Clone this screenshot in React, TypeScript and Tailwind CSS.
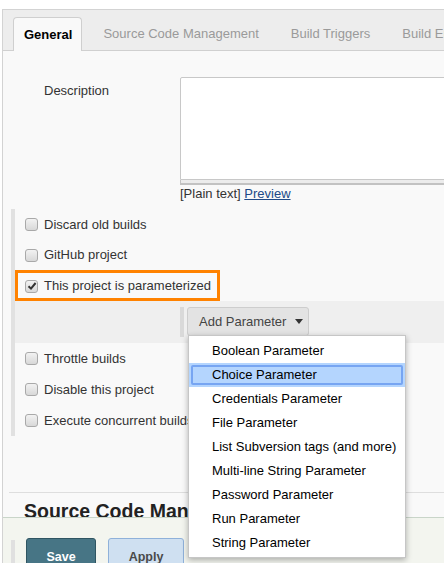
import React from 'react';

const tabs = ['Source Code Management', 'Build Triggers', 'Build Environment'];

const params = [
  'Boolean Parameter',
  'Choice Parameter',
  'Credentials Parameter',
  'File Parameter',
  'List Subversion tags (and more)',
  'Multi-line String Parameter',
  'Password Parameter',
  'Run Parameter',
  'String Parameter',
];

const Checkbox: React.FC<{ checked?: boolean }> = ({ checked }) => (
  <span className="relative flex h-[13px] w-[13px] shrink-0 items-center justify-center rounded-[3px] border border-[#a9a9a9] bg-gradient-to-b from-[#f2f2f2] to-[#d8d8d8]">
    {checked && (
      <svg width="10" height="10" viewBox="0 0 10 10">
        <path d="M1.5 5.2 L4 7.6 L8.6 2" fill="none" stroke="#333" strokeWidth="2" />
      </svg>
    )}
  </span>
);

const OptionRow: React.FC<{ label: string; className?: string }> = ({ label, className = 'h-[31px]' }) => (
  <div className={`flex items-center gap-[6px] pl-[10px] ${className}`}>
    <Checkbox />
    <span className="whitespace-nowrap">{label}</span>
  </div>
);

export default function App() {
  return (
    <div className="relative h-[563px] w-[444px] overflow-hidden bg-white font-['Liberation_Sans',Arial,sans-serif] text-[13px] leading-4 text-[#333]">
      <div className="ml-[2px] mt-[9px] h-[554px] border-l border-t border-[#d3d3d3] bg-[#f9f9f9]">
        {/* Tab bar */}
        <div className="flex h-[41px] items-end gap-[10px] whitespace-nowrap border-b border-[#d0d0d0] bg-[#ededed] pl-[10px]">
          <div className="-mb-px flex h-[34px] items-center rounded-t-[4px] border border-b-0 border-[#cfcfcf] bg-[#f9f9f9] pl-[10px] pr-[9px] font-bold text-black">
            General
          </div>
          {tabs.map((t) => (
            <div key={t} className="flex h-[33px] items-center px-[11px] text-[#9a9a9a]">
              {t}
            </div>
          ))}
        </div>

        {/* Description */}
        <div className="mt-[26px] flex">
          <div className="w-[177px] shrink-0 pl-[41px] pt-[6px]">Description</div>
          <div className="flex-1">
            <div className="h-[103px] w-[300px] rounded-tl-[2px] border border-[#c8c8c8] bg-white" />
            <div className="h-[5px] w-[300px] border-b-[2px] border-l border-[#c2c2c2] bg-[#ececec]" />
            <div className="pt-px">
              [Plain text] <span className="text-[#204a87] underline">Preview</span>
            </div>
          </div>
        </div>

        {/* Options */}
        <div className="ml-[8px] mt-[7px] flex h-[227px]">
          <div className="w-[4px] shrink-0 bg-[#e1e1e1]" />
          <div className="flex-1">
            <OptionRow label="Discard old builds" />
            <OptionRow label="GitHub project" className="h-[30px]" />
            <div className="flex h-[31px] w-[205px] items-center gap-[6px] border-[3px] border-[#ff8200] pl-[7px] pt-[1px]">
              <Checkbox checked />
              <span className="whitespace-nowrap">This project is parameterized</span>
            </div>
            <div className="flex h-[42px] items-start bg-[#efefef] pl-[165px] pt-[6px]">
              <div className="h-[30px] w-[4px] bg-[#d9d9d9]" />
              <div className="ml-[3px] flex h-[29px] w-[122px] items-center rounded-[3px] border border-[#cdcdcd] bg-[#e3e3e3] pl-[11px] text-[#444]">
                Add Parameter
                <svg className="ml-[9px]" width="8" height="5" viewBox="0 0 8 5">
                  <path d="M0 0 H8 L4 5 Z" fill="#333" />
                </svg>
              </div>
            </div>
            <OptionRow label="Throttle builds" />
            <OptionRow label="Disable this project" />
            <OptionRow label="Execute concurrent builds if necessary" />
          </div>
        </div>

        <div className="ml-[6px] mt-[56px] h-px bg-[#dedede]" />
        <div className="mt-[6px] whitespace-nowrap pl-[21px] text-[19.5px] font-bold leading-[24px] text-[#222]">
          Source Code Management
        </div>
      </div>

      {/* Bottom sticky bar */}
      <div className="absolute bottom-0 left-[3px] right-0 top-[517px] border-t border-[#c9d5c9] bg-[#f3f5ef]">
        <div className="flex pl-[8px] pt-[20px]">
          <div className="mt-[2px] h-[30px] w-[4px] bg-[#e0e0e0]" />
          <div className="ml-[11px] flex h-[30px] w-[70px] justify-center rounded-[3px] border border-[#2f5562] bg-[#477585] pt-[10px] text-[12.5px] font-bold text-white">
            Save
          </div>
          <div className="ml-[12px] flex h-[30px] w-[76px] justify-center rounded-[3px] border border-[#8fb1da] bg-[#cfe0f1] pt-[10px] text-[12.5px] font-bold text-[#4a4a4a]">
            Apply
          </div>
        </div>
      </div>

      {/* Dropdown menu */}
      <div className="absolute left-[188px] top-[335px] h-[223px] w-[218px] border border-[#c6c6c6] bg-white pb-[2px] pt-[3px] shadow-[0_2px_6px_rgba(0,0,0,0.3)]">
        {params.map((p) =>
          p === 'Choice Parameter' ? (
            <div key={p} className="h-[24px] bg-[#b4d5fe] p-[2px]">
              <div className="flex h-[20px] items-center rounded-[2px] border-2 border-[#77a5f2] pl-[19px] text-black">
                {p}
              </div>
            </div>
          ) : (
            <div key={p} className="flex h-[24px] items-center pl-[23px] text-black">
              {p}
            </div>
          )
        )}
      </div>
    </div>
  );
}
